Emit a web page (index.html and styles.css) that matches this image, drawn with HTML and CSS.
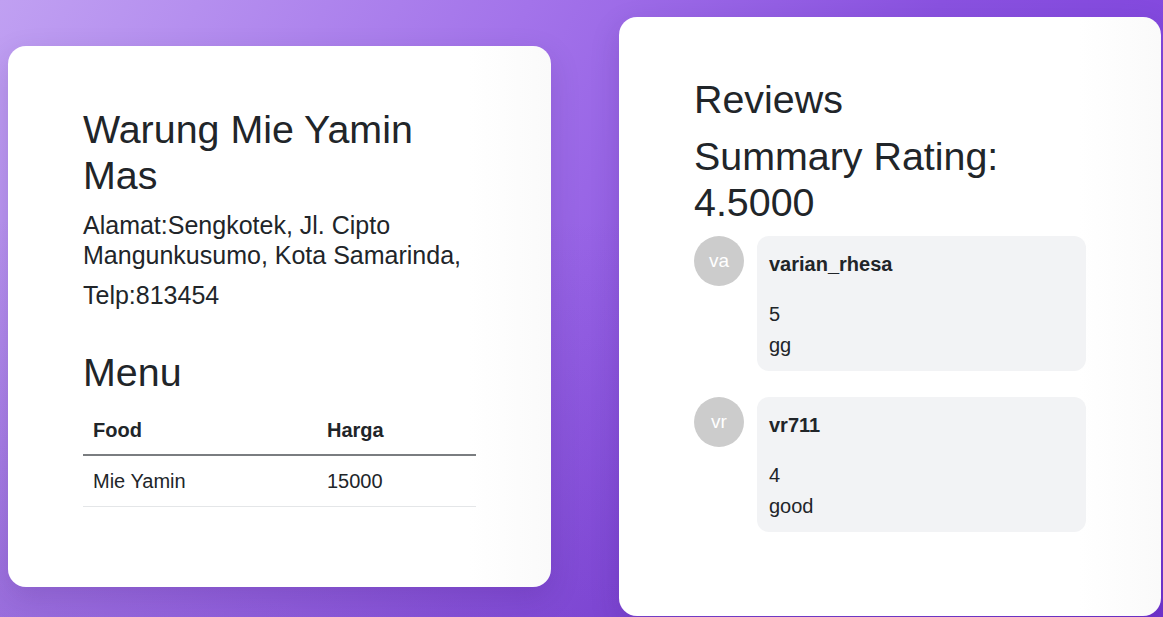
FILE: index.html
```html
<!DOCTYPE html>
<html>
<head>
<meta charset="utf-8">
<link rel="stylesheet" href="styles.css">
</head>
<body>
<div class="page">
  <section class="card info">
    <h1 class="title">Warung Mie Yamin Mas</h1>
    <p class="addr">Alamat:Sengkotek, Jl. Cipto Mangunkusumo, Kota Samarinda,</p>
    <p class="telp">Telp:813454</p>
    <h2 class="title menu-title">Menu</h2>
    <table class="menu">
      <thead>
        <tr><th class="col-food">Food</th><th>Harga</th></tr>
      </thead>
      <tbody>
        <tr><td>Mie Yamin</td><td>15000</td></tr>
      </tbody>
    </table>
  </section>
  <section class="card reviews">
    <h2 class="title">Reviews</h2>
    <h2 class="title summary">Summary Rating:<br>4.5000</h2>
    <div class="review">
      <div class="avatar">va</div>
      <div class="bubble">
        <div class="name">varian_rhesa</div>
        <p class="line">5</p>
        <p class="line">gg</p>
      </div>
    </div>
    <div class="review">
      <div class="avatar">vr</div>
      <div class="bubble">
        <div class="name">vr711</div>
        <p class="line">4</p>
        <p class="line">good</p>
      </div>
    </div>
  </section>
</div>
</body>
</html>
```
FILE: styles.css
```css
* { box-sizing: border-box; }
html, body {
  margin: 0;
  height: 100%;
}
body {
  font-family: "Liberation Sans", Arial, sans-serif;
  color: #212529;
  background:
    linear-gradient(180deg, rgba(70, 20, 150, 0) 35%, rgba(70, 20, 150, 0.18) 100%),
    linear-gradient(120deg, #c0a0f2 0%, #a373ea 35%, #8a52e0 62%, #7a3cdc 100%);
  overflow: hidden;
}
.page {
  height: 617px;
  padding-top: 16px;
  display: flex;
  align-items: center;
  padding-left: 8px;
  gap: 68px;
}
.card {
  background: linear-gradient(90deg, #ffffff 85%, #fafafa 100%);
  border-radius: 18px;
  flex: 0 0 auto;
  box-shadow: 0 10px 30px rgba(40, 10, 90, 0.15);
}
.info {
  width: 543px;
  padding: 60px 75px 80px;
}
.reviews {
  width: 542px;
  padding: 59px 75px 84px;
}
.title {
  font-size: 39.4px;
  line-height: 46px;
  font-weight: 400;
  margin: 0;
}
.addr {
  font-size: 25px;
  line-height: 30px;
  margin: 12px 0 0;
}
.telp {
  font-size: 25px;
  line-height: 30px;
  margin: 10px 0 0;
}
.menu-title {
  margin-top: 39px;
}
.menu {
  width: 100%;
  margin-top: 11px;
  border-collapse: collapse;
  font-size: 20px;
}
.menu th, .menu td {
  text-align: left;
  padding: 12px 10px;
  line-height: 24px;
}
.menu td {
  padding: 13px 10px;
}
.menu th {
  font-weight: 700;
  border-bottom: 2px solid #7a7d80;
}
.menu td {
  border-bottom: 1px solid #e4e6e8;
}
.col-food { width: 234px; }
.summary {
  margin-top: 11px;
}
.review {
  display: flex;
  gap: 13px;
  margin-top: 11px;
}
.review + .review {
  margin-top: 26px;
}
.avatar {
  width: 50px;
  height: 50px;
  border-radius: 50%;
  background: #cccccc;
  color: #ffffff;
  font-size: 19px;
  display: flex;
  align-items: center;
  justify-content: center;
  flex: 0 0 auto;
}
.bubble {
  width: 330px;
  background: #f2f3f5;
  border-radius: 12px;
  padding: 12px 12px 10px;
  font-size: 20px;
}
.name {
  font-weight: 700;
  line-height: 24px;
  margin: 4px 0 23px;
}
.line {
  margin: 0;
  line-height: 31px;
}
```
